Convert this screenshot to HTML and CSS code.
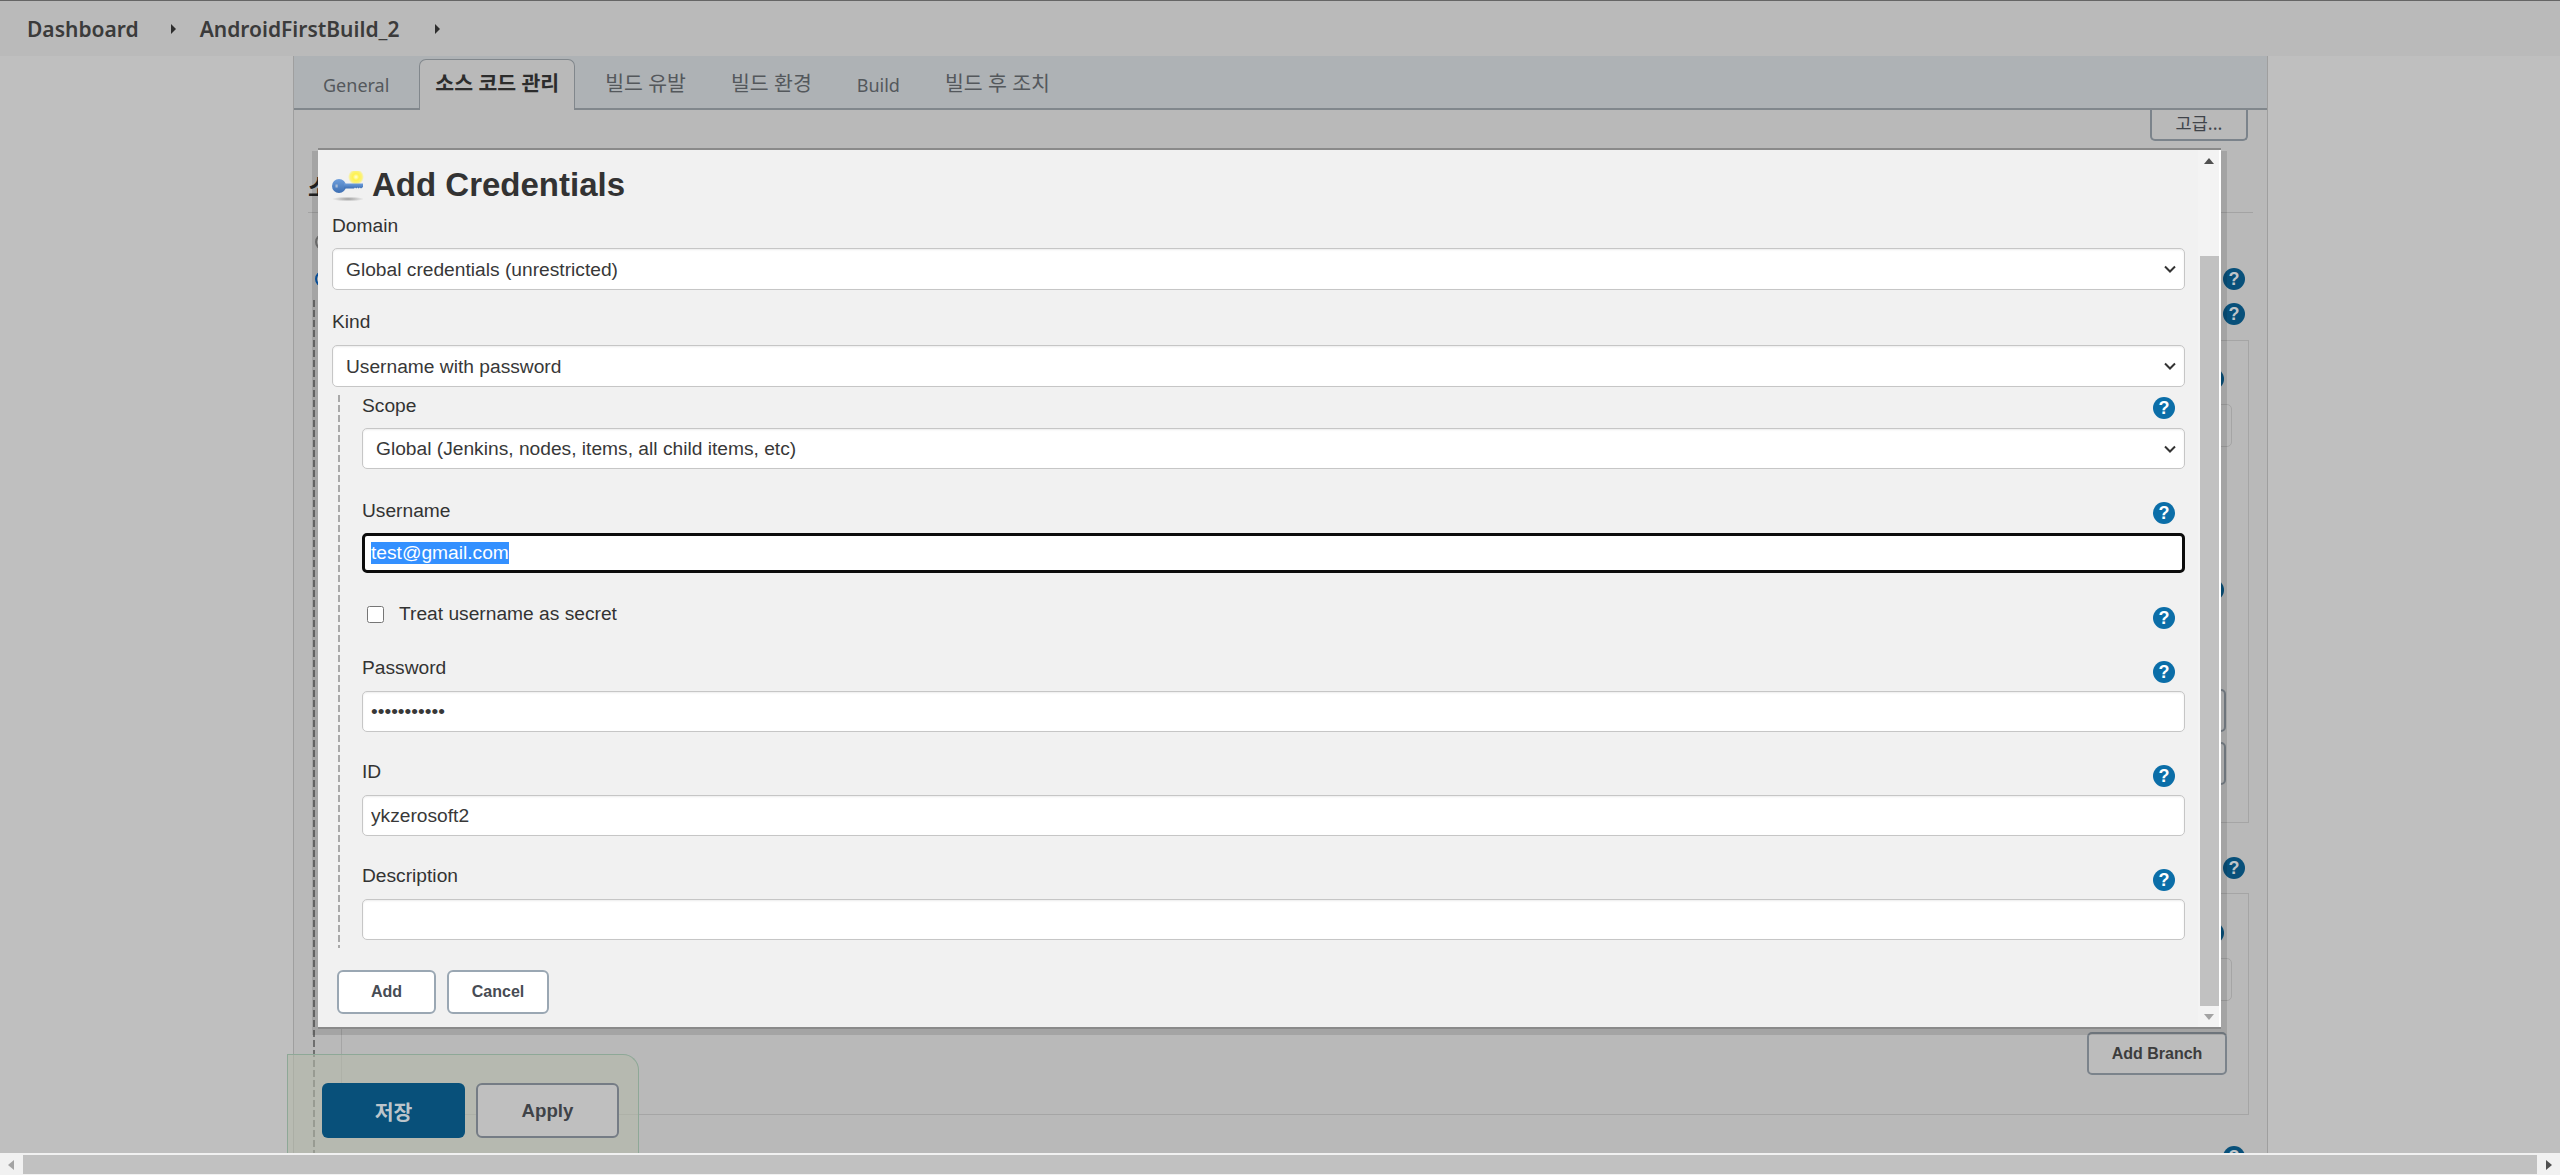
FILE: index.html
```html
<!DOCTYPE html>
<html lang="ko">
<head>
<meta charset="utf-8">
<title>AndroidFirstBuild_2 Config</title>
<link rel="stylesheet" href="styles.css">
</head>
<body>
<header class="crumbs">
  <a class="crumb">Dashboard</a><span class="crumb-arrow"></span>
  <a class="crumb">AndroidFirstBuild_2</a><span class="crumb-arrow"></span>
</header>

<main class="job">
  <nav class="tabs">
    <span class="tab">General</span>
    <span class="tab tab-ko tab-active">소스 코드 관리</span>
    <span class="tab tab-ko">빌드 유발</span>
    <span class="tab tab-ko">빌드 환경</span>
    <span class="tab">Build</span>
    <span class="tab tab-ko">빌드 후 조치</span>
  </nav>
  <section class="panel">
    <div class="dash-guide"></div>
    <div class="adv-row"><button class="adv-btn">고급...</button></div>
    <h2 class="section-title">소</h2>
    <div class="scm-row scm-first"><span class="radio"></span></div>
    <div class="scm-row scm-second"><span class="radio radio-on"></span><span class="help help-bg">?</span></div>
    <div class="scm-row scm-third"><span class="help help-bg">?</span></div>
    <div class="box box-one">
      <span class="help help-bg help-hidden hh1">?</span>
      <div class="ghost-input gi1"></div>
      <span class="help help-bg help-hidden hh2">?</span>
      <button class="ghost-btn gb1"></button>
      <button class="ghost-btn gb2"></button>
    </div>
    <div class="scm-row scm-fourth"><span class="help help-bg">?</span></div>
    <div class="box box-two">
      <span class="help help-bg help-hidden hh3">?</span>
      <div class="ghost-input gi2"></div>
      <button class="add-branch">Add Branch</button>
    </div>
    <div class="scm-row scm-fifth"><span class="help help-bg">?</span></div>
  </section>
</main>

<div class="savebar">
  <button class="save">저장</button>
  <button class="apply">Apply</button>
</div>

<div class="modal">
  <div class="modal-surface">
    <div class="modal-body">
      <h1 class="modal-title">
        <svg class="key" viewBox="0 0 32 32" width="32" height="32" aria-hidden="true">
          <defs>
            <radialGradient id="glow"><stop offset="0" stop-color="#ffffd8"/><stop offset=".4" stop-color="#fff24e"/><stop offset=".75" stop-color="#fff24e" stop-opacity=".7"/><stop offset="1" stop-color="#fff24e" stop-opacity="0"/></radialGradient>
            <radialGradient id="drop"><stop offset="0" stop-color="#9c9c9c"/><stop offset="1" stop-color="#9c9c9c" stop-opacity="0"/></radialGradient>
            <linearGradient id="metal" x1="0" y1="0" x2="0" y2="1"><stop offset="0" stop-color="#6f9fdc"/><stop offset="1" stop-color="#3d6fb3"/></linearGradient>
          </defs>
          <ellipse cx="16" cy="28" rx="16" ry="2.400" fill="url(#drop)"/>
          <circle cx="24" cy="6" r="8" fill="url(#glow)"/>
          <circle cx="7" cy="15" r="7" fill="url(#metal)"/>
          <path d="M12 12.500h19v3.500l-2 1.600-1.200-1-1.200 1-1.200-1-1.200 1-1.200-1-1 1H12z" fill="url(#metal)"/>
          <rect x="3.500" y="13.500" width="2.200" height="3" fill="#a9bcd6"/>
        </svg>
        Add Credentials
      </h1>

      <div class="label-row"><label>Domain</label></div>
      <div class="select-wrap gap-10">
        <select class="ctl"><option>Global credentials (unrestricted)</option></select>
        <svg class="chev" viewBox="0 0 12 8" width="12" height="8" aria-hidden="true"><path d="M1 1.500l5 5 5-5" fill="none" stroke="#333" stroke-width="2"/></svg>
      </div>

      <div class="label-row mt-20"><label>Kind</label></div>
      <div class="select-wrap gap-11">
        <select class="ctl"><option>Username with password</option></select>
        <svg class="chev" viewBox="0 0 12 8" width="12" height="8" aria-hidden="true"><path d="M1 1.500l5 5 5-5" fill="none" stroke="#333" stroke-width="2"/></svg>
      </div>

      <div class="nested">
        <div class="label-row"><label>Scope</label><span class="help">?</span></div>
        <div class="select-wrap gap-10 h-41">
          <select class="ctl"><option>Global (Jenkins, nodes, items, all child items, etc)</option></select>
          <svg class="chev" viewBox="0 0 12 8" width="12" height="8" aria-hidden="true"><path d="M1 1.500l5 5 5-5" fill="none" stroke="#333" stroke-width="2"/></svg>
        </div>

        <div class="label-row mt-30"><label>Username</label><span class="help">?</span></div>
        <div class="ctl focused gap-10"><span class="selection">test@gmail.com</span></div>

        <div class="label-row check-row">
          <label class="check"><input type="checkbox"><span>Treat username as secret</span></label>
          <span class="help help-low">?</span>
        </div>

        <div class="label-row mt-30"><label>Password</label><span class="help help-low">?</span></div>
        <input class="ctl gap-11 h-41 block" type="password" value="12345678901">

        <div class="label-row mt-28"><label>ID</label><span class="help help-low">?</span></div>
        <input class="ctl gap-11 h-41 block" type="text" value="ykzerosoft2">

        <div class="label-row mt-28"><label>Description</label><span class="help help-low">?</span></div>
        <input class="ctl gap-11 h-41 block" type="text">
      </div>

      <div class="modal-actions">
        <button class="btn-add">Add</button>
        <button class="btn-cancel">Cancel</button>
      </div>
    </div>
    <div class="vscroll">
      <div class="vs-top"><span class="arrow-up"></span></div>
      <div class="vs-thumb"></div>
      <div class="vs-bottom"><span class="arrow-down"></span></div>
    </div>
  </div>
</div>

<div class="hscroll">
  <div class="hs-end"><span class="arrow-left"></span></div>
  <div class="hs-thumb"></div>
  <div class="hs-end hs-end-r"><span class="arrow-right"></span></div>
</div>
</body>
</html>
```

FILE: styles.css
```css
* { box-sizing: border-box; }
html, body { margin: 0; height: 1175px; overflow: hidden; }
body {
  position: relative;
  background: #bfbfbf;
  color: #333;
  font-family: "Liberation Sans", "Noto Sans CJK KR", sans-serif;
  font-size: 19.2px;
}
button { font-family: inherit; cursor: default; }

/* breadcrumb */
.crumbs {
  height: 56px;
  background: #bababa;
  border-top: 1px solid #666;
  display: flex;
  align-items: center;
  padding: 0 0 0 27px;
  font-family: "Noto Sans", "Noto Sans CJK KR", sans-serif;
  font-weight: 600;
  font-size: 21px;
  color: #3b3b3b;
}
.crumb-arrow {
  width: 0; height: 0;
  border-left: 5px solid #2e2e2e;
  border-top: 5px solid transparent;
  border-bottom: 5px solid transparent;
  margin: 0 24px 0 32px;
}
.crumb-arrow:last-child { margin-left: 36px; }

/* job config page behind the dialog */
.job {
  margin-left: 293px;
  width: 1975px;
  height: 1119px;
  background: #b9b9b9;
  border-left: 1px solid #9f9f9f;
  border-right: 1px solid #9f9f9f;
}
.tabs {
  height: 54px;
  background: #aeb2b5;
  border-bottom: 2px solid #81878c;
  display: flex;
  align-items: flex-end;
  gap: 15px;
  padding-left: 14px;
  font-family: "Noto Sans", "Noto Sans CJK KR", sans-serif;
  font-size: 18px;
  color: #54585c;
}
.tab {
  height: 50px;
  line-height: 50px;
  padding: 0 15px;
  margin-bottom: -2px;
  white-space: nowrap;
}
.tab-ko {
  font-size: 20.5px;
  line-height: 46px;
}
.tab-active {
  background: #b9b9b9;
  border: 1px solid #81878c;
  border-bottom: 0;
  border-radius: 7px 7px 0 0;
  font-weight: 700;
  color: #2c2c2c;
  padding: 0 15px;
  height: 51px;
}
.panel {
  position: relative;
  padding-left: 14px;
  height: 1009px;
}
.dash-guide {
  position: absolute;
  left: 19px;
  top: 190px;
  width: 2px;
  height: 853px;
  background: repeating-linear-gradient(to bottom, #6f6f6f 0 7px, transparent 7px 10px);
}
.adv-row {
  height: 31px;
  display: flex;
  justify-content: flex-end;
  padding-right: 19px;
}
.adv-btn {
  width: 98px;
  height: 31px;
  border: 2px solid #7b838b;
  border-top: 0;
  border-radius: 0 0 5px 5px;
  background: #b9b9b9;
  color: #40444a;
  font-size: 17.5px;
  padding: 0 0 10px;
  font-family: "Noto Sans CJK KR", sans-serif;
}
.section-title {
  margin: 0 14px 0 0;
  height: 72px;
  border-bottom: 1px solid #a3a3a3;
  font-size: 24px;
  line-height: 24px;
  padding-top: 35px;
  font-weight: 700;
  color: #222;
  white-space: nowrap;
  overflow: hidden;
}
.scm-row {
  display: flex;
  align-items: center;
  justify-content: space-between;
  height: 22px;
  padding-right: 22px;
}
.scm-first { margin-top: 18px; padding-left: 7px; }
.scm-second { margin-top: 15px; padding-left: 7px; }
.scm-third { margin-top: 13px; justify-content: flex-end; }
.scm-fourth { margin-top: 34px; justify-content: flex-end; }
.scm-fifth { margin-top: 31px; justify-content: flex-end; }
.radio {
  width: 16px; height: 16px;
  border-radius: 50%;
  border: 2px solid #757575;
}
.radio-on { border-color: #0a57a8; }
.box {
  position: relative;
  margin: 15px 18px 0 33px;
  border: 1px solid #a5a5a5;
  display: flex;
  flex-direction: column;
  align-items: flex-end;
}
.box-one { height: 483px; margin-top: 15px; }
.box-two { height: 222px; margin-top: 14px; }
.gi1 { margin-top: 14px; }
.gb1 { margin-top: 88px; }
.gb2 { margin-top: 10px; }
.gi2 { margin-top: 14px; }
.ghost-input {
  width: 400px;
  height: 43px;
  margin-right: 16px;
  border: 1px solid #a5a5a5;
  border-radius: 5px;
}
.ghost-btn {
  width: 140px;
  height: 43px;
  margin-right: 22px;
  border: 2px solid #7b838b;
  border-radius: 5px;
  background: #bdbdbd;
}
.add-branch {
  width: 140px;
  height: 43px;
  margin: 31px 21px 0 0;
  border: 2px solid #7b838b;
  border-radius: 5px;
  background: #bcbcbc;
  font-weight: 700;
  font-size: 16px;
  color: #3d3d3d;
  padding: 0;
}

/* sticky save bar */
.savebar {
  position: absolute;
  left: 287px;
  top: 1054px;
  width: 352px;
  height: 99px;
  background: rgba(180, 185, 170, .6);
  border: 1px solid #8ea897;
  border-bottom: 0;
  border-radius: 0 16px 0 0;
  padding: 28px 0 0 34px;
  display: flex;
  gap: 11px;
  align-items: flex-start;
}
.save, .apply {
  width: 143px;
  height: 55px;
  border-radius: 6px;
  font-size: 18.67px;
  font-weight: 700;
  padding: 0;
}
.save {
  background: #08507a;
  border: 0;
  color: #bcc5cb;
  font-size: 20.5px;
}
.apply {
  background: #bfbfbf;
  border: 2px solid #757c85;
  color: #3f4348;
}

/* dialog */
.modal {
  position: absolute;
  left: 318px;
  top: 148px;
  width: 1903px;
  height: 881px;
}
.modal::before {
  content: "";
  position: absolute;
  inset: 3px -6px -6px -6px;
  background: rgba(0, 0, 0, .11);
}
.modal-surface {
  position: relative;
  height: 100%;
  display: flex;
  background: #f1f1f1;
  border-top: 2px solid #8a8a8a;
  border-bottom: 2px solid #8a8a8a;
}
.modal-body {
  flex: 1;
  min-width: 0;
  padding: 2px 13px 0 14px;
}
.modal-title {
  display: flex;
  align-items: center;
  gap: 8px;
  height: 62px;
  margin: 0;
  padding-top: 4px;
  font-size: 33px;
  font-weight: 700;
  color: #333;
}
.key { margin-top: 4px; flex: none; }
.label-row {
  display: flex;
  justify-content: space-between;
  align-items: flex-start;
  height: 24px;
  line-height: 24px;
  color: #333;
}
.mt-20 { margin-top: 20px; }
.mt-28 { margin-top: 28px; }
.mt-30 { margin-top: 30px; }
.gap-10 { margin-top: 10px; }
.gap-11 { margin-top: 11px; }
.select-wrap { position: relative; height: 42px; }
.select-wrap.h-41 { height: 41px; }
.ctl {
  width: 100%;
  height: 100%;
  padding: 0 8px;
  background: #fff;
  border: 1px solid #c6c6c6;
  border-radius: 5px;
  box-shadow: inset 0 1px 2px #ececec;
  color: #383838;
  font: 19.2px "Liberation Sans", sans-serif;
  outline: none;
  appearance: none;
}
select.ctl { padding-left: 13px; }
.ctl.block { display: block; }
.ctl.h-41 { height: 41px; }
.chev {
  position: absolute;
  right: 9px;
  top: 17px;
}
.nested {
  margin: 7px 0 0 6px;
  padding: 0 0 8px 24px;
  background: repeating-linear-gradient(to bottom, #a9a9a9 0 7px, transparent 7px 10px) no-repeat left 1px / 2px 100%;
}
.focused {
  height: 40px;
  border: 3px solid #0c0c0c;
  padding: 0 0 0 6px;
  display: flex;
  align-items: center;
  box-shadow: none;
}
.selection {
  background: #3390ff;
  color: #fff;
  line-height: 22px;
}
.help {
  flex: none;
  width: 22px;
  height: 22px;
  margin: 3px 10px 0 0;
  border-radius: 50%;
  background: #0b6ea8;
  color: #fff;
  font: 700 18px/22px "Liberation Sans", sans-serif;
  text-align: center;
}
.help-low { margin-top: 5px; }
.help-bg { background: #08507a; color: #bfc5c9; margin: 0; }
.help-hidden { margin: 0 24px 0 0; }
.box .hh1 { margin-top: 27px; }
.box .hh2 { margin-top: 132px; }
.box .hh3 { margin-top: 28px; }
.check-row { margin-top: 29px; }
.check {
  display: flex;
  align-items: center;
  gap: 15px;
  padding-left: 5px;
}
.check input {
  width: 17px;
  height: 17px;
  margin: 0;
}
.modal-actions {
  display: flex;
  gap: 11px;
  margin: 22px 0 0 5px;
}
.btn-add, .btn-cancel {
  height: 44px;
  background: #fff;
  border: 2px solid #9aa7b3;
  border-radius: 6px;
  color: #474c54;
  font-size: 16px;
  font-weight: 700;
  padding: 0;
}
.btn-add { width: 99px; }
.btn-cancel { width: 102px; }

/* dialog scrollbar */
.vscroll {
  flex: none;
  width: 23px;
  display: flex;
  flex-direction: column;
  padding-right: 2px;
  background: linear-gradient(to right, #f3f3f3 21px, #fff 21px);
}
.vs-top, .vs-bottom {
  display: flex;
  justify-content: center;
}
.vs-top { height: 106px; padding-top: 8px; }
.vs-thumb { flex: 1; margin-left: 2px; background: #c1c1c1; }
.vs-bottom { height: 21px; padding-top: 8px; }
.arrow-up, .arrow-down {
  width: 0; height: 0;
  border-left: 5.500px solid transparent;
  border-right: 5.500px solid transparent;
}
.arrow-up { border-bottom: 6px solid #505050; }
.arrow-down { border-top: 6px solid #a3a3a3; }

/* page scrollbar */
.hscroll {
  position: absolute;
  left: 0;
  right: 0;
  bottom: 0;
  height: 22px;
  background: #f1f1f1;
  padding: 2px 0 1px;
  display: flex;
}
.hs-end {
  flex: none;
  width: 23px;
  display: flex;
  align-items: center;
  padding-left: 8px;
}
.hs-end-r { padding-left: 9px; }
.hs-thumb { flex: 1; background: #c1c1c1; }
.arrow-left, .arrow-right {
  width: 0; height: 0;
  border-top: 5.500px solid transparent;
  border-bottom: 5.500px solid transparent;
}
.arrow-left { border-right: 6px solid #a3a3a3; }
.arrow-right { border-left: 6px solid #505050; }
```
